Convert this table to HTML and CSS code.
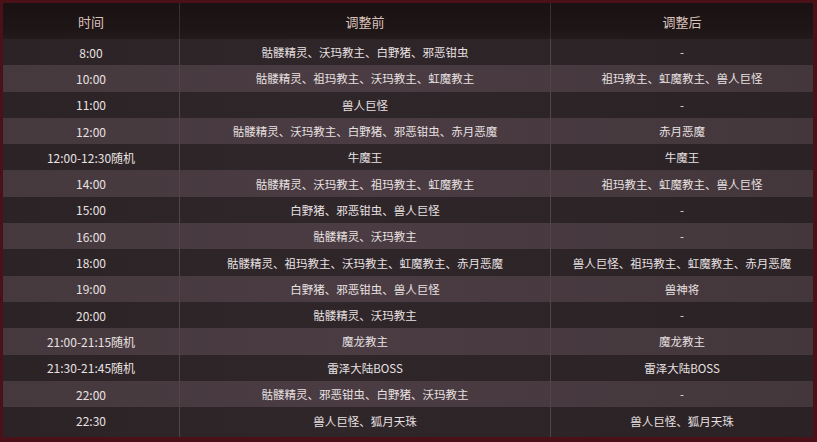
FILE: index.html
```html
<!DOCTYPE html>
<html lang="zh">
<head>
<meta charset="utf-8">
<link rel="stylesheet" href="styles.css">
</head>
<body>
<div class="frame">
  <div class="table">
    <div class="row head"><div class="cell">时间</div><div class="cell">调整前</div><div class="cell">调整后</div></div>
    <div class="row dark"><div class="cell">8:00</div><div class="cell">骷髅精灵、沃玛教主、白野猪、邪恶钳虫</div><div class="cell">-</div></div>
    <div class="row light"><div class="cell">10:00</div><div class="cell">骷髅精灵、祖玛教主、沃玛教主、虹魔教主</div><div class="cell">祖玛教主、虹魔教主、兽人巨怪</div></div>
    <div class="row dark"><div class="cell">11:00</div><div class="cell">兽人巨怪</div><div class="cell">-</div></div>
    <div class="row light"><div class="cell">12:00</div><div class="cell">骷髅精灵、沃玛教主、白野猪、邪恶钳虫、赤月恶魔</div><div class="cell">赤月恶魔</div></div>
    <div class="row dark"><div class="cell">12:00-12:30随机</div><div class="cell">牛魔王</div><div class="cell">牛魔王</div></div>
    <div class="row light"><div class="cell">14:00</div><div class="cell">骷髅精灵、沃玛教主、祖玛教主、虹魔教主</div><div class="cell">祖玛教主、虹魔教主、兽人巨怪</div></div>
    <div class="row dark"><div class="cell">15:00</div><div class="cell">白野猪、邪恶钳虫、兽人巨怪</div><div class="cell">-</div></div>
    <div class="row light"><div class="cell">16:00</div><div class="cell">骷髅精灵、沃玛教主</div><div class="cell">-</div></div>
    <div class="row dark"><div class="cell">18:00</div><div class="cell">骷髅精灵、祖玛教主、沃玛教主、虹魔教主、赤月恶魔</div><div class="cell">兽人巨怪、祖玛教主、虹魔教主、赤月恶魔</div></div>
    <div class="row light"><div class="cell">19:00</div><div class="cell">白野猪、邪恶钳虫、兽人巨怪</div><div class="cell">兽神将</div></div>
    <div class="row dark"><div class="cell">20:00</div><div class="cell">骷髅精灵、沃玛教主</div><div class="cell">-</div></div>
    <div class="row light"><div class="cell">21:00-21:15随机</div><div class="cell">魔龙教主</div><div class="cell">魔龙教主</div></div>
    <div class="row dark"><div class="cell">21:30-21:45随机</div><div class="cell">雷泽大陆BOSS</div><div class="cell">雷泽大陆BOSS</div></div>
    <div class="row light"><div class="cell">22:00</div><div class="cell">骷髅精灵、邪恶钳虫、白野猪、沃玛教主</div><div class="cell">-</div></div>
    <div class="row dark last"><div class="cell">22:30</div><div class="cell">兽人巨怪、狐月天珠</div><div class="cell">兽人巨怪、狐月天珠</div></div>
  </div>
</div>
</body>
</html>
```

FILE: styles.css
```css
html, body {
  margin: 0;
  padding: 0;
  background: #4a1119;
}
body {
  width: 817px;
  height: 442px;
  overflow: hidden;
  font-family: "Noto Sans CJK SC", "Liberation Sans", sans-serif;
}
.frame {
  box-sizing: border-box;
  width: 817px;
  height: 442px;
  padding: 3px 4px 5px 3px;
  background: #4a1119;
}
.table {
  display: flex;
  flex-direction: column;
  height: 100%;
  background: #2c2327;
}
.row {
  display: grid;
  grid-template-columns: 177px 371px 262px;
  height: 26.3px;
  color: #e8e1e1;
  font-size: 11.5px;
}
.cell {
  display: flex;
  align-items: center;
  justify-content: center;
  white-space: nowrap;
  border-right: 1px solid #54444a;
}
.row .cell:first-child {
  font-size: 12px;
}
.head .cell:first-child {
  font-size: 13px;
}
.cell:last-child {
  border-right: none;
}
.head {
  height: 36px;
  background: linear-gradient(180deg, #1a1113, #1e1517 70%, #231a1c);
  color: #dbc3ba;
  font-size: 13px;
}
.head .cell {
  border-right-color: #3e2c30;
}
.dark {
  background: linear-gradient(90deg, #2c2326, #2f262a 40%, #2b2226);
}
.light {
  background: linear-gradient(90deg, #46393e, #4a3c42 45%, #44373c);
}
.last {
  flex: 1;
  height: auto;
}
.last .cell {
  padding-bottom: 3px;
}
```
